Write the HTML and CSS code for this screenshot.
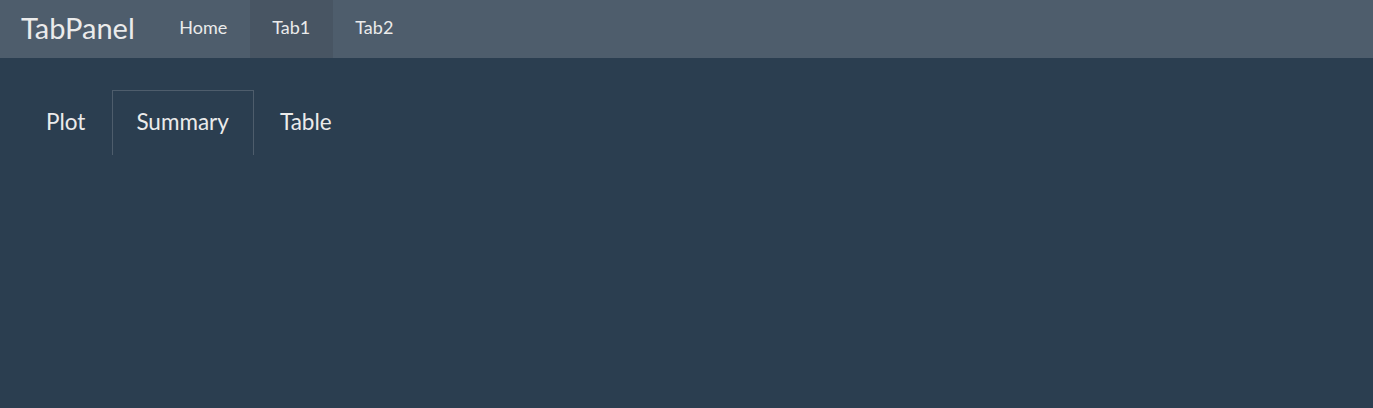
FILE: index.html
```html
<!DOCTYPE html>
<html>
<head>
<meta charset="utf-8">
<link rel="stylesheet" href="styles.css">
</head>
<body>
<nav class="navbar">
  <span class="brand">TabPanel</span>
  <ul class="nav">
    <li class="nav-item">Home</li>
    <li class="nav-item active">Tab1</li>
    <li class="nav-item">Tab2</li>
  </ul>
</nav>
<main class="content">
  <ul class="tabs">
    <li class="tab">Plot</li>
    <li class="tab active">Summary</li>
    <li class="tab">Table</li>
  </ul>
</main>
</body>
</html>
```
FILE: styles.css
```css
html, body {
  margin: 0;
  padding: 0;
  height: 100%;
  background: #2b3e50;
  color: #ebebeb;
  font-family: Lato, "Open Sans", sans-serif;
}
.navbar {
  display: flex;
  align-items: stretch;
  height: 58px;
  background: #4e5d6c;
  padding-left: 21px;
}
.brand {
  display: flex;
  align-items: center;
  font-size: 29px;
  padding-bottom: 4px;
  margin-right: 22px;
  color: #ebebeb;
}
.nav {
  display: flex;
  list-style: none;
  margin: 0;
  padding: 0;
}
.nav-item {
  display: flex;
  align-items: center;
  padding: 0 22.5px 4px;
  font-size: 18px;
}
.nav-item.active {
  background: #485563;
}
.content {
  padding: 32px 21px 0 22px;
}
.tabs {
  display: flex;
  gap: 2px;
  list-style: none;
  margin: 0;
  padding: 0;
}
.tab {
  font-size: 22.5px;
  padding: 17px 24px 0 23px;
  height: 47px;
  border: 1px solid transparent;
  border-bottom: none;
}
.tab.active {
  border-color: #4e5d6c;
}
```
